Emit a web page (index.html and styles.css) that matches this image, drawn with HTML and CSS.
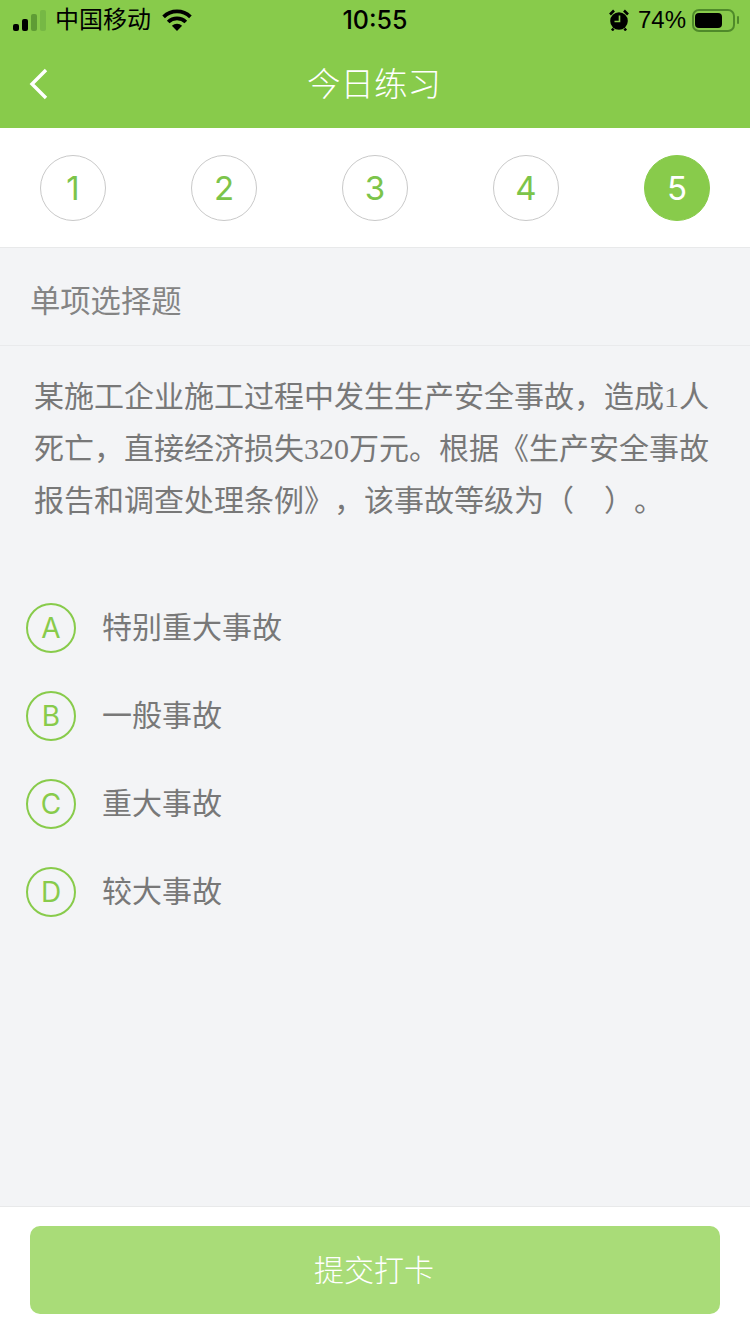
FILE: index.html
```html
<!DOCTYPE html>
<html lang="zh-CN">
<head>
    <meta charset="UTF-8">
    <meta name="viewport" content="width=device-width, initial-scale=1.0">
    <title>今日练习</title>
    <link rel="stylesheet" href="styles.css">
</head>
<body>
    <div class="page">
        <header class="top">
            <div class="status">
                <div class="status-left">
                    <div class="signal">
                        <i class="bar bar1"></i><i class="bar bar2"></i><i class="bar bar3"></i><i class="bar bar4"></i>
                    </div>
                    <span class="carrier">中国移动</span>
                    <svg class="wifi" width="30" height="22" viewBox="0 0 30 22">
                        <path d="M15 22L9.9 16.7a7.4 7.4 0 0 1 10.2 0z" fill="#000"/>
                        <path d="M6.2 13a12.6 12.6 0 0 1 17.6 0" fill="none" stroke="#000" stroke-width="3.8"/>
                        <path d="M1.6 7.8a19.4 19.4 0 0 1 26.8 0" fill="none" stroke="#000" stroke-width="3.8"/>
                    </svg>
                </div>
                <div class="time">10:55</div>
                <div class="status-right">
                    <svg class="alarm" width="20" height="22" viewBox="0 0 20 22">
                        <circle cx="10" cy="12" r="8.8" fill="#000"/>
                        <path d="M1 5.5L5 1.5M19 5.5L15 1.5M4.5 19.5L3 21.5M15.5 19.5L17 21.5" stroke="#000" stroke-width="2.6" fill="none"/>
                        <path d="M10.5 6.5V12.5H5.5" stroke="#88cb4b" stroke-width="1.6" fill="none"/>
                    </svg>
                    <span class="percent">74%</span>
                    <div class="battery"><div class="battery-level"></div></div>
                    <i class="battery-tip"></i>
                </div>
            </div>
            <nav class="nav">
                <svg class="back" width="20" height="32" viewBox="0 0 20 32">
                    <path d="M17 2L3 16L17 30" fill="none" stroke="#fff" stroke-width="3.4"/>
                </svg>
                <h1>今日练习</h1>
            </nav>
        </header>

        <div class="steps">
            <div class="step">1</div>
            <div class="step">2</div>
            <div class="step">3</div>
            <div class="step">4</div>
            <div class="step active">5</div>
        </div>

        <main class="content">
            <div class="type">单项选择题</div>
            <p class="question">某施工企业施工过程中发生生产安全事故，造成1人死亡，直接经济损失320万元。根据《生产安全事故报告和调查处理条例》，该事故等级为（　）。</p>
            <ul class="options">
                <li class="option"><span class="letter">A</span>特别重大事故</li>
                <li class="option"><span class="letter">B</span>一般事故</li>
                <li class="option"><span class="letter">C</span>重大事故</li>
                <li class="option"><span class="letter">D</span>较大事故</li>
            </ul>
        </main>

        <footer class="bottom">
            <button class="submit">提交打卡</button>
        </footer>
    </div>
</body>
</html>
```

FILE: styles.css
```css
* {
    box-sizing: border-box;
}

body {
    margin: 0;
    background-color: #f3f4f6;
    font-family: "Noto Sans CJK SC", sans-serif;
    text-spacing-trim: space-all;
}

.page {
    width: 750px;
    height: 1334px;
    display: flex;
    flex-direction: column;
    overflow: hidden;
}

.top {
    height: 128px;
    background-color: #88cb4b;
    flex-shrink: 0;
}

.status {
    height: 40px;
    padding: 0 11px 0 13px;
    display: flex;
    justify-content: space-between;
    align-items: center;
    position: relative;
    color: #000;
    font-family: "Liberation Sans", "Noto Sans CJK SC", sans-serif;
}

.status-left,
.status-right {
    display: flex;
    align-items: center;
}

.signal {
    display: flex;
    align-items: flex-end;
    gap: 3px;
    height: 21px;
    width: 33px;
}

.bar {
    display: block;
    width: 6px;
    border-radius: 2px;
    background-color: #000;
}

.bar1 { height: 7px; }
.bar2 { height: 12px; }
.bar3 { height: 17px; background-color: #5f9c35; }
.bar4 { height: 21px; background-color: #76b845; }

.carrier {
    margin-left: 9px;
    font-size: 24px;
    line-height: 40px;
    font-weight: 400;
}

.wifi {
    margin-left: 11px;
}

.time {
    position: absolute;
    left: 0;
    right: 0;
    top: 0;
    text-align: center;
    font-size: 25px;
    line-height: 41px;
    font-family: Inter, "Liberation Sans", sans-serif;
    font-weight: 500;
    pointer-events: none;
}

.alarm {
    margin-right: 9px;
}

.percent {
    font-size: 24px;
    line-height: 40px;
}

.battery {
    width: 43px;
    height: 23px;
    margin-left: 6px;
    padding: 2px 1px;
    border: 2px solid #4f8a2a;
    border-radius: 7px;
}

.battery-level {
    width: 74%;
    height: 100%;
    background-color: #000;
    border-radius: 4px;
}

.battery-tip {
    display: block;
    width: 2px;
    height: 8px;
    margin-left: 2px;
    background-color: #4f8a2a;
    border-radius: 1px;
}

.nav {
    height: 88px;
    position: relative;
    display: flex;
    align-items: center;
    justify-content: center;
}

.back {
    position: absolute;
    left: 29px;
    top: 28px;
}

.nav h1 {
    margin: 0 2px 4px 0;
    color: #fff;
    font-size: 33.5px;
    font-weight: 300;
    line-height: 84px;
}

.steps {
    height: 120px;
    padding: 27px 40px 0;
    display: flex;
    justify-content: space-between;
    align-items: flex-start;
    background-color: #fff;
    border-bottom: 1px solid #e8e9ea;
    flex-shrink: 0;
}

.step {
    width: 66px;
    height: 66px;
    border: 1px solid #c9c9c9;
    border-radius: 50%;
    display: flex;
    align-items: center;
    justify-content: center;
    color: #7cc44a;
    font-family: Inter, "Liberation Sans", sans-serif;
    font-size: 33px;
    font-weight: 400;
}

.step.active {
    background-color: #88cb4b;
    border-color: #88cb4b;
    color: #fff;
}

.content {
    flex: 1;
    background-color: #f3f4f6;
}

.type {
    height: 98px;
    padding-left: 30px;
    border-bottom: 1px solid #e9eaec;
    color: #848484;
    font-size: 30.3px;
    font-weight: 400;
    line-height: 103px;
}

.question {
    margin: 25px 0 0;
    padding: 0 34px;
    color: #787878;
    font-family: "Liberation Serif", "Noto Sans CJK SC", serif;
    font-size: 30px;
    font-weight: 400;
    line-height: 52px;
}

.options {
    list-style: none;
    margin: 54px 0 0;
    padding: 0 0 0 26px;
}

.option {
    height: 88px;
    display: flex;
    align-items: center;
    color: #787878;
    font-size: 30px;
    font-weight: 400;
}

.letter {
    width: 50px;
    height: 50px;
    margin: 6px 26px 0 0;
    border: 2px solid #88cb4b;
    border-radius: 50%;
    display: flex;
    align-items: center;
    justify-content: center;
    color: #88cb4b;
    font-family: Inter, "Liberation Sans", sans-serif;
    font-size: 28px;
    font-weight: 400;
}

.bottom {
    height: 128px;
    padding: 19px 30px 0;
    background-color: #fff;
    border-top: 1px solid #e8e9ea;
    flex-shrink: 0;
}

.submit {
    display: block;
    width: 100%;
    height: 88px;
    padding: 0 2px 4px 0;
    border: none;
    border-radius: 10px;
    background-color: #a9dc78;
    color: #fff;
    font-family: inherit;
    font-size: 30px;
    font-weight: 300;
}
```
